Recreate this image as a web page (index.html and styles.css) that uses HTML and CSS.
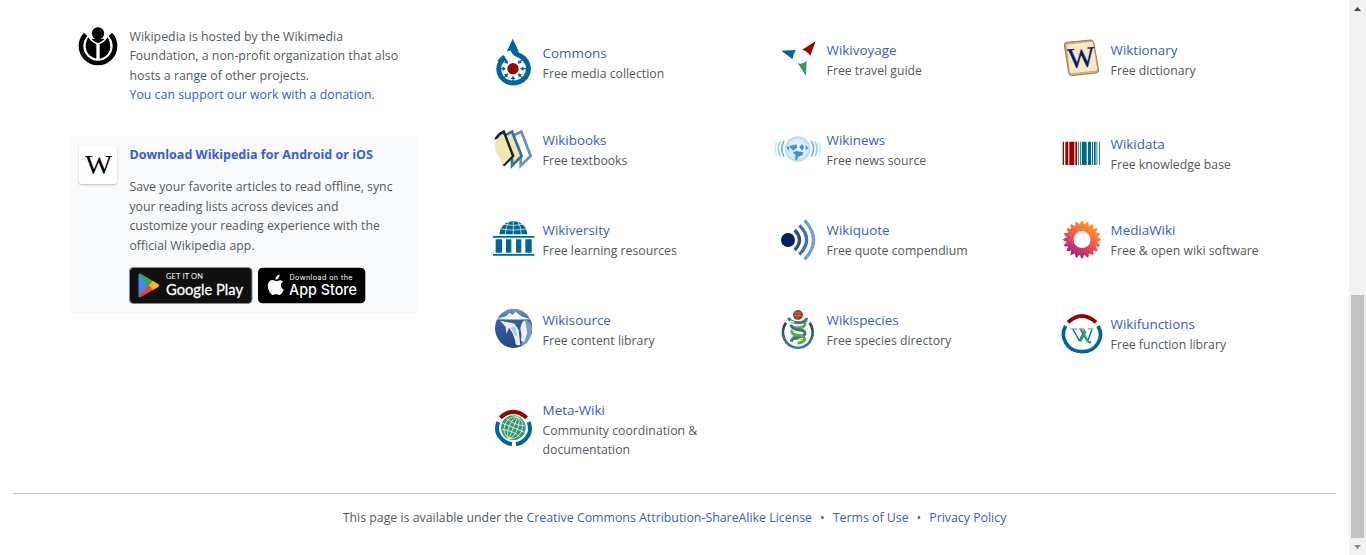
FILE: index.html
```html
<!DOCTYPE html>
<html lang="en">
<head>
<meta charset="utf-8">
<title>Wikipedia</title>
<link rel="stylesheet" href="styles.css">
</head>
<body>
<div class="page">
<div class="content">
<main class="footer">
  <aside class="sidebar">
    <section class="hosted">
      <svg class="wmf" viewBox="54 34 120 120"><circle cx="114" cy="53" r="18.500"/><path d="M77 56A51 51 0 1 0 151 56" fill="none" stroke="#000" stroke-width="14"/><path d="M85 65l24 21v43C77 122 69 91 85 65zM143 65l-24 21v43c32-6 40-37 24-64z"/><path d="M93 72q9 10 21 10t21-10l-5-3H98z"/><path d="M88 65q10 16 26 19 16-3 26-19M114 84v49" fill="none" stroke="#fff" stroke-width="4.500"/></svg>
      <p>Wikipedia is hosted by the Wikimedia<br>Foundation, a non-profit organization that also<br>hosts a range of other projects.<br><a href="#">You can support our work with a donation.</a></p>
    </section>
    <section class="app">
      <svg class="app-icon" viewBox="0 0 38 38"><text x="19.500" y="28" text-anchor="middle" font-family="Liberation Serif, serif" font-size="27" textLength="27" lengthAdjust="spacingAndGlyphs">W</text></svg>
      <div>
        <h2><a href="#">Download Wikipedia for Android or iOS</a></h2>
        <p>Save your favorite articles to read offline, sync<br>your reading lists across devices and<br>customize your reading experience with the<br>official Wikipedia app.</p>
        <div class="badges">
          <svg width="124" height="37" viewBox="0 0 124 37"><rect x=".5" y=".5" width="122.500" height="36" rx="4" fill="#111" stroke="#8c8c8c"/><path d="M9.500 7v23L21 18.500z" fill="#4285f4"/><path d="M9.500 7.500Q10 6 12 7l13 7.500-5 5z" fill="#34a853"/><path d="M9.500 29.500Q10 31 12 30l13-7.500-5-5z" fill="#ea4335"/><path d="M24 14l5.500 3.200q1.300 1.300 0 2.600L24 23l-4.500-4.500z" fill="#fbbc04"/><text x="37" y="11.700" fill="#fff" font-family="Lato, sans-serif" font-size="7.500" textLength="37">GET IT ON</text><text x="37" y="27.500" fill="#fff" stroke="#fff" stroke-width=".3" font-family="Lato, sans-serif" font-size="16" textLength="77" lengthAdjust="spacingAndGlyphs">Google Play</text></svg>
          <svg width="108" height="37" viewBox="0 0 108 37"><rect x="0" y=".7" width="107.300" height="35.600" rx="4.500"/><path d="M19.500 14c2-1.300 4.200-1.200 5.500.8-3 2-2.700 6 .7 7.700-1 3-2.800 5.500-4.300 5.500-1.300 0-1.800-.7-3.100-.7s-2 .7-3.100.7c-2.700 0-5.700-6-5.400-9.500.3-4.500 4-6.500 7-4.800q1.200.7 2.700.3zM17.500 12.800c-.3-2.500 1.500-4.700 4-5.300.3 2.800-1.700 5-4 5.300z" fill="#fff"/><text x="31.500" y="13.300" fill="#fff" font-family="Inter, sans-serif" font-size="7.200" textLength="63">Download on the</text><text x="31" y="27.500" fill="#fff" font-family="Inter, sans-serif" font-weight="500" font-size="15" textLength="68" lengthAdjust="spacingAndGlyphs">App Store</text></svg>
        </div>
      </div>
    </section>
  </aside>

  <nav class="projects">
    <div class="project commons">
      <svg viewBox="12 24 150 150"><path d="M61 83C27 104 39 158 85 159c43 0 60-49 30-75-12-12-27-8-31-25" fill="none" stroke="#069" stroke-width="15"/><path d="M83 26l19 40q-19-11-37 0zM36 92q14-13 19-17l12 19z" fill="#069"/><circle cx="84" cy="116" r="17" fill="#900"/><g fill="#069"><path d="M45 114h8v-5l10 7-10 7v-5h-8z" id="tick"/><use href="#tick" transform="rotate(-45 84 116)"/><use href="#tick" transform="rotate(-90 84 116)"/><use href="#tick" transform="rotate(-135 84 116)"/><use href="#tick" transform="rotate(45 84 116)"/><use href="#tick" transform="rotate(135 84 116)"/><use href="#tick" transform="rotate(180 84 116)"/></g></svg>
      <p><a href="#">Commons</a><br>Free media collection</p>
    </div>
    <div class="project">
      <svg viewBox="9 24 150 150"><path d="M34 62l44-2q-9 11-10 28z" fill="#069"/><path d="M137 34l-16 43q-10-15-25-18z" fill="#900"/><path d="M83 99q14 6 27-7l-2 46z" fill="#396"/></svg>
      <p><a href="#">Wikivoyage</a><br>Free travel guide</p>
    </div>
    <div class="project">
      <svg viewBox="6 24 150 150"><path d="M28 45q0-7 7-8l72-7q7 0 9 7l15 83q0 8-6 9l-75 8q-7 0-9-8z" fill="#d8ba8d" stroke="#5d4a38" stroke-width="2"/><path d="M33 43l77-9q4 0 5 5l13 77q0 6-5 7l-74 8q-5 0-6-5z" fill="#fde6c4" stroke="#9c7e59" stroke-width="1.500"/><text x="79" y="111" text-anchor="middle" transform="rotate(-5 79 90)" font-family="Liberation Serif, serif" font-size="86" fill="#001767" stroke="#001767" stroke-width="1">W</text></svg>
      <p><a href="#">Wiktionary</a><br>Free dictionary</p>
    </div>
    <div class="project">
      <svg viewBox="12 294 150 150"><g stroke-width="8"><path d="M83 317l26-12 28 73-30 29V387l-26-64" fill="#fff" stroke="#6490ca"/><path d="M58 317l23-12 29 73-29 29V387l-25-64" fill="#efe6b2" stroke="#3470a5"/><path d="M32 330q4-16 24-25l28 73-29 29" fill="#efe6b2" stroke="#1a222c"/></g><path d="M31 327q15 1 25-13l24 64-25 26-25-45z" fill="#efe6b2"/></svg>
      <p><a href="#">Wikibooks</a><br>Free textbooks</p>
    </div>
    <div class="project">
      <svg viewBox="9 294 150 150"><defs><radialGradient id="news"><stop offset="0" stop-color="#f4fbff"/><stop offset=".75" stop-color="#d2ecff"/><stop offset="1" stop-color="#b8d3ec"/></radialGradient></defs><circle cx="83" cy="357" r="38" fill="url(#news)"/><path d="M57 349l22-6 3 9-12 11zM68 368l10-6 22 5-3 9-13 4-3 11-6-2 2-14zM88 351l8-9 6 8-5 12zM49 350h9l-2 13zM107 345l8 10-8 6z" fill="#3992db"/><g fill="none"><path d="M42 333q-13 23 0 47M124 333q13 23 0 47" stroke="#7db0d8" stroke-width="5"/><path d="M31 334q-12 22 0 45M135 334q12 22 0 45" stroke="#8bd2fa" stroke-width="5"/><path d="M20 336q-9 20 0 42M146 336q9 20 0 42" stroke="#c7ebfc" stroke-width="5"/></g></svg>
      <p><a href="#">Wikinews</a><br>Free news source</p>
    </div>
    <div class="project down">
      <svg viewBox="6 294 150 150"><path d="M23 335h4v70h-4zM31 335h9v70h-9zM43 335h15v70H43zM61 335h5v70h-5z" fill="#900"/><path d="M69 335h3v70h-3zM75 335h4v70h-4zM124 335h3v70h-3zM132 335h3v70h-3z" fill="#396"/><path d="M81 335h14v70H81zM99 335h9v70h-9zM111 335h3v70h-3zM117 335h5v70h-5z" fill="#069"/></svg>
      <p><a href="#">Wikidata</a><br>Free knowledge base</p>
    </div>
    <div class="project">
      <svg viewBox="12 24 150 150"><path d="M43 73q4-36 42-40 38 4 42 40zM24 78h124v5H24zM32 88h19v40H32zM63 88h16v40H63zM93 88h16v40H93zM121 88h19v40h-19zM24 132h124v5H24z" fill="#069"/><path d="M85 33v40M71 35q-9 16-10 38M99 35q9 16 10 38M57 43q28 7 56 0M47 57q38 7 76 0" fill="none" stroke="#fff" stroke-width="2"/></svg>
      <p><a href="#">Wikiversity</a><br>Free learning resources</p>
    </div>
    <div class="project">
      <svg viewBox="9 24 150 150"><circle cx="54" cy="90" r="21" fill="#002060"/><g fill="none" stroke-width="10"><path d="M74 60q29 30 0 60" stroke="#285078"/><path d="M88 46q44 43 0 87" stroke="#3f72a8"/><path d="M104 31q53 59 0 117" stroke="#759fd1"/></g></svg>
      <p><a href="#">Wikiquote</a><br>Free quote compendium</p>
    </div>
    <div class="project">
      <svg viewBox="6 24 150 150"><defs><linearGradient id="sun" x1=".75" y1=".1" x2=".25" y2="1"><stop offset="0" stop-color="#ff9c22"/><stop offset=".45" stop-color="#f5594b"/><stop offset=".7" stop-color="#c83370"/><stop offset="1" stop-color="#7c2d83"/></linearGradient><mask id="flower"><g fill="#fff"><path id="petal" d="M81 31q7 7 7 18h-14q0-11 7-18z"/><use href="#petal" transform="rotate(18 81 89)"/><use href="#petal" transform="rotate(36 81 89)"/><use href="#petal" transform="rotate(54 81 89)"/><use href="#petal" transform="rotate(72 81 89)"/><use href="#petal" transform="rotate(90 81 89)"/><use href="#petal" transform="rotate(108 81 89)"/><use href="#petal" transform="rotate(126 81 89)"/><use href="#petal" transform="rotate(144 81 89)"/><use href="#petal" transform="rotate(162 81 89)"/><use href="#petal" transform="rotate(180 81 89)"/><use href="#petal" transform="rotate(198 81 89)"/><use href="#petal" transform="rotate(216 81 89)"/><use href="#petal" transform="rotate(234 81 89)"/><use href="#petal" transform="rotate(252 81 89)"/><use href="#petal" transform="rotate(270 81 89)"/><use href="#petal" transform="rotate(288 81 89)"/><use href="#petal" transform="rotate(306 81 89)"/><use href="#petal" transform="rotate(324 81 89)"/><use href="#petal" transform="rotate(342 81 89)"/><circle cx="81" cy="89" r="36" fill="none" stroke="#fff" stroke-width="22"/></g><circle cx="81" cy="89" r="25"/></mask></defs><path d="M23 31h116v116H23z" fill="url(#sun)" mask="url(#flower)"/></svg>
      <p><a href="#">MediaWiki</a><br>Free &amp; open wiki software</p>
    </div>
    <div class="project">
      <svg viewBox="12 294 150 150"><defs><linearGradient id="source" y2="1" x2="0"><stop offset="0" stop-color="#76a0c7"/><stop offset=".3" stop-color="#3a5f9e"/><stop offset="1" stop-color="#244886"/></linearGradient><clipPath id="disc"><ellipse cx="86" cy="355" rx="56" ry="59"/></clipPath></defs><g clip-path="url(#disc)"><path d="M30 296h112v118H30z" fill="url(#source)"/><path d="M38 325l25-6 10-10 10 5 9-9 17 14 23 7-23 2H60z" fill="#f6f9fc"/><path d="M118 327q28 10 24 45l-16 40-17-3z" fill="#739bc6"/><path d="M46 332q25 5 43 9l12 19 5 45q-17 4-15-12l-8-23-11-17-8 18-2-20zM111 338q8-12 11 1l5 30-10 28-9-5 1-20-3-17z" fill="#e9f0f7"/><path d="M76 351l14 1 8 31-8-8z" fill="#a9c2df"/><path d="M35 327h104" stroke="#eaf2fa" stroke-width="2"/></g></svg>
      <p><a href="#">Wikisource</a><br>Free content library</p>
    </div>
    <div class="project">
      <svg viewBox="9 294 150 150"><defs><linearGradient id="ring" y2="1" x2="0"><stop offset="0" stop-color="#243e50"/><stop offset=".6" stop-color="#396d78"/><stop offset="1" stop-color="#377bac"/></linearGradient></defs><path d="M48 338c-19 28-8 72 35 76 45-3 54-48 36-76" fill="none" stroke="url(#ring)" stroke-width="8"/><path d="M65 349h38M69 358h33M67 379h34M68 388h33" stroke="#8ba3bd" stroke-width="4"/><g fill="none" stroke-width="9"><path d="M55 324q8 14 29 14 24 0 26-14" stroke="#377779"/><path d="M105 338q2 12-19 17-22 3-21 12" stroke="#5caa49"/><path d="M62 344q4 12 24 15 20 2 19 12-2 8-20 11-21 3-21 13" stroke="#377779"/><path d="M65 367q6 9 23 9 18 3 16 13-4 9-21 10" stroke="#5caa49"/></g><path d="M67 359q10 9 27 12M60 333l13 4M69 394q15-3 25-7" stroke="#e4f2cd" stroke-width="4" fill="none"/><circle cx="84" cy="315" r="15" fill="#a83e2f"/><path d="M75 309h16M74 317h19" stroke="#d59482" stroke-width="2"/></svg>
      <p><a href="#">Wikispecies</a><br>Free species directory</p>
    </div>
    <div class="project down">
      <svg viewBox="6 294 150 150"><g fill="none" stroke-width="11"><path d="M39 337q42-38 84 0" stroke="#900"/><path d="M32 348c-19 34 5 77 49 77s68-43 48-77" stroke="#069"/></g><g fill="none"><path d="M54 358l19 34 16-33M77 358l21 34 13-33" stroke="#069" stroke-width="4"/><path d="M78 359l19 33q4 6 12 5M75 395l17-31" stroke="#396" stroke-width="7"/><path d="M47 357h20M72 357h16M98 357h17" stroke="#396" stroke-width="3"/></g></svg>
      <p><a href="#">Wikifunctions</a><br>Free function library</p>
    </div>
    <div class="project">
      <svg viewBox="12 9 150 150"><g fill="none" stroke-width="12"><path d="M46 68q39-35 79 0" stroke="#900"/><path d="M40 81q-11 29 9 50 13 14 32 17M131 81q11 29-8 50-12 14-30 17" stroke="#069"/></g><circle cx="85" cy="98" r="37" fill="#396"/><g fill="none" stroke="#fff" stroke-width="2" transform="rotate(22 85 98)"><ellipse cx="85" cy="98" rx="13" ry="34"/><ellipse cx="85" cy="98" rx="27" ry="34"/><path d="M85 62v72M49 98h72M55 80q30 10 60 0M55 116q30-10 60 0"/></g></svg>
      <p><a href="#">Meta-Wiki</a><br>Community coordination &amp;<br>documentation</p>
    </div>
  </nav>
</main>
<footer class="legal">
  <span>This page is available under the <a href="#">Creative Commons Attribution-ShareAlike License</a></span><span>•</span><a href="#">Terms of Use</a><span>•</span><a href="#">Privacy Policy</a>
</footer>
</div>
<div class="scrollbar">
  <svg width="17" height="17"><path d="M5 11l3.500-4 3.500 4z" fill="#404040"/></svg>
  <div class="thumb"></div>
  <svg width="17" height="17"><path d="M5 7l3.500 4L12 7z" fill="#888"/></svg>
</div>
</div>
</body>
</html>
```

FILE: styles.css
```css
* { box-sizing: border-box; }
body { margin: 0; background: #fff; color: #54595d; font: 12.35px/19.5px "Open Sans", "Noto Sans", sans-serif; }
p, h2 { margin: 0; white-space: nowrap; }
a { color: #3660c8; text-decoration: none; }
.page { display: flex; height: 555px; overflow: hidden; }
.content { width: 1349px; flex: none; padding: 0 13px; }
.footer { display: flex; height: 493px; padding-left: 56px; }
.sidebar { width: 350px; flex: none; padding-top: 27px; }
.hosted, .app { display: flex; gap: 11.5px; padding-left: 9px; }
.hosted { height: 109px; }
.hosted p { line-height: 19.3px; }
.wmf { width: 40px; height: 40px; flex: none; }
.app { height: 177px; padding: 9px 0 0 10px; gap: 12.4px; background: #f8f9fa; }
.app p { font-size: 12.3px; }
.app-icon { width: 38px; height: 38px; flex: none; margin-top: 1px; background: #fff; border-radius: 3px; box-shadow: 0 1px 2px #bbb; }
h2 { font-size: 12.5px; line-height: 19px; margin-bottom: 13px; }
.badges { display: flex; gap: 5px; margin: 12px 0 0 -.4px; }
.projects { display: grid; flex: none; grid-template-columns: repeat(3, 284px); grid-auto-rows: 90px; margin: 38px 0 0 70px; }
.project { display: flex; gap: 3.6px; padding-top: 2px; font-size: 12.25px; }
.project svg { width: 50px; height: 50px; flex: none; margin-top: -2px; }
.project a { font-size: 13.4px; line-height: 20px; }
.commons p { margin-top: 3px; }
.down p { margin-top: 4px; }
.legal { display: flex; justify-content: center; gap: 8px; border-top: 1px solid #c8ccd1; padding-top: 14px; white-space: nowrap; }
.scrollbar { width: 17px; background: #f1f1f1; display: flex; flex-direction: column; }
.thumb { width: 13px; height: 243px; margin: 278px 2px 0; background: #c1c1c1; }
```
